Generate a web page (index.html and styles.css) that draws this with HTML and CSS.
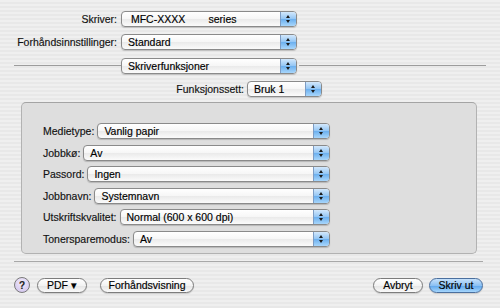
FILE: index.html
```html
<!DOCTYPE html>
<html lang="no">

<head>
    <meta charset="utf-8">
    <title>Skriv ut</title>
    <link rel="stylesheet" href="styles.css">
</head>

<body>
    <div class="dialog">
        <div class="top">
            <div class="row">
                <span class="lbl">Skriver:</span>
                <div class="popup main"><span class="value"> MFC-XXXX        series</span><span class="arrows"></span></div>
            </div>
            <div class="row">
                <span class="lbl">Forhåndsinnstillinger:</span>
                <div class="popup main"><span class="value">Standard</span><span class="arrows"></span></div>
            </div>
        </div>

        <div class="sep-row">
            <span class="line left"></span>
            <div class="popup main"><span class="value">Skriverfunksjoner</span><span class="arrows"></span></div>
            <span class="line right"></span>
        </div>

        <div class="func-row">
            <span class="lbl">Funksjonssett:</span>
            <div class="popup small"><span class="value">Bruk 1</span><span class="arrows"></span></div>
        </div>

        <section class="panel">
            <div class="prow">
                <span class="lbl">Medietype:</span>
                <div class="popup"><span class="value">Vanlig papir</span><span class="arrows"></span></div>
            </div>
            <div class="prow">
                <span class="lbl">Jobbkø:</span>
                <div class="popup"><span class="value">Av</span><span class="arrows"></span></div>
            </div>
            <div class="prow">
                <span class="lbl">Passord:</span>
                <div class="popup"><span class="value">Ingen</span><span class="arrows"></span></div>
            </div>
            <div class="prow">
                <span class="lbl">Jobbnavn:</span>
                <div class="popup"><span class="value">Systemnavn</span><span class="arrows"></span></div>
            </div>
            <div class="prow">
                <span class="lbl">Utskriftskvalitet:</span>
                <div class="popup"><span class="value">Normal (600 x 600 dpi)</span><span class="arrows"></span></div>
            </div>
            <div class="prow">
                <span class="lbl">Tonersparemodus:</span>
                <div class="popup"><span class="value">Av</span><span class="arrows"></span></div>
            </div>
        </section>

        <div class="rule"></div>

        <footer class="actions">
            <button class="help">?</button>
            <button class="btn pdf">PDF &#9662;</button>
            <button class="btn preview">Forhåndsvisning</button>
            <span class="spacer"></span>
            <button class="btn cancel">Avbryt</button>
            <button class="btn default">Skriv ut</button>
        </footer>
    </div>
</body>

</html>
```

FILE: styles.css
```css
body {
    margin: 0;
    font-family: "Liberation Sans", Arial, sans-serif;
    font-size: 10.5px;
    color: #111;
    -webkit-text-stroke: 0.15px currentColor;
}

.dialog {
    width: 500px;
    height: 308px;
    overflow: hidden;
    background: repeating-linear-gradient(to bottom, #efefef 0 2px, #e8e8e8 2px 4px);
    display: flex;
    flex-direction: column;
}

/* top rows */
.top {
    display: flex;
    flex-direction: column;
    gap: 7px;
    padding-top: 11px;
}

.row {
    display: flex;
    align-items: center;
}

.row .lbl {
    width: 117px;
    text-align: right;
    margin-right: 4px;
}

.sep-row {
    display: flex;
    align-items: center;
    margin-top: 8px;
}

.line {
    height: 1px;
    background: #9c9c9c;
    margin-top: -1px;
}

.line.left {
    width: 107px;
    margin-left: 14px;
}

.line.right {
    width: 187px;
    margin-left: 2px;
}

.func-row {
    display: flex;
    justify-content: flex-end;
    align-items: center;
    margin-top: 7px;
    padding-right: 178px;
}

.func-row .lbl {
    margin-right: 3px;
}

/* popup buttons */
.popup {
    display: flex;
    height: 14px;
    border: 1px solid #8a8a8a;
    border-radius: 4px;
    background: linear-gradient(to bottom, #ffffff, #f6f6f6 50%, #eaeaea 52%, #fbfbfb);
    box-shadow: 0 1px 1px rgba(0, 0, 0, 0.18);
}

.popup.main {
    width: 174px;
}

.popup.small {
    width: 73px;
}

.popup .value {
    flex: 1;
    padding-left: 6px;
    line-height: 14px;
    white-space: pre;
    color: #000;
    overflow: hidden;
}

.popup .arrows {
    width: 15px;
    border-left: 1px solid #7d9cc4;
    border-radius: 0 3px 3px 0;
    background: linear-gradient(#d3e8fc, #92c5f4 50%, #6cb0ef 52%, #a8d6fb);
    position: relative;
}

.popup .arrows::before,
.popup .arrows::after {
    content: "";
    position: absolute;
    left: 5px;
    border-left: 2.5px solid transparent;
    border-right: 2.5px solid transparent;
}

.popup .arrows::before {
    top: 3px;
    border-bottom: 3px solid #1a1a1a;
}

.popup .arrows::after {
    bottom: 3px;
    border-top: 3px solid #1a1a1a;
}

/* panel */
.panel {
    margin: 5px 23px 0 21px;
    height: 130px;
    padding: 20px 0 0 21px;
    border: 1px solid #b2b2b2;
    border-top-color: #a4a4a4;
    border-radius: 5px;
    background: #dedede;
    display: flex;
    flex-direction: column;
    gap: 5.6px;
}

.prow {
    display: flex;
    align-items: center;
    width: 287px;
}

.prow .lbl {
    margin-right: 3px;
}

.prow .popup {
    flex: 1;
}

.rule {
    height: 1px;
    background: #a8a8a8;
    margin: 7px 17px 0 14px;
}

/* bottom buttons */
.actions {
    display: flex;
    align-items: center;
    margin-top: 15px;
    padding: 0 17px 0 14px;
}

.help {
    width: 16px;
    height: 16px;
    padding: 0;
    border-radius: 50%;
    border: 1px solid #7a7a7a;
    background: radial-gradient(circle at 50% 35%, #f2ecfb, #cdbfeb);
    font: bold 10px "Liberation Sans", Arial, sans-serif;
    color: #222;
    margin-right: 7px;
}

.btn {
    height: 15px;
    padding: 0;
    border: 1px solid #7c7c7c;
    border-radius: 8px;
    background: linear-gradient(to bottom, #ffffff, #f3f3f3 50%, #e4e4e4 52%, #fafafa);
    box-shadow: 0 1px 1px rgba(0, 0, 0, 0.15);
    font: 10.5px "Liberation Sans", Arial, sans-serif;
    color: #000;
    line-height: 13px;
}

.pdf {
    width: 50px;
    margin-right: 13px;
}

.preview {
    width: 94px;
}

.spacer {
    flex: 1;
}

.cancel {
    width: 50px;
    margin-right: 6px;
}

.default {
    width: 54px;
    border-color: #4a6f9e;
    background: linear-gradient(to bottom, #c6e1fb, #8cc1f3 50%, #5ea6ec 52%, #a6d6fc);
}
```
